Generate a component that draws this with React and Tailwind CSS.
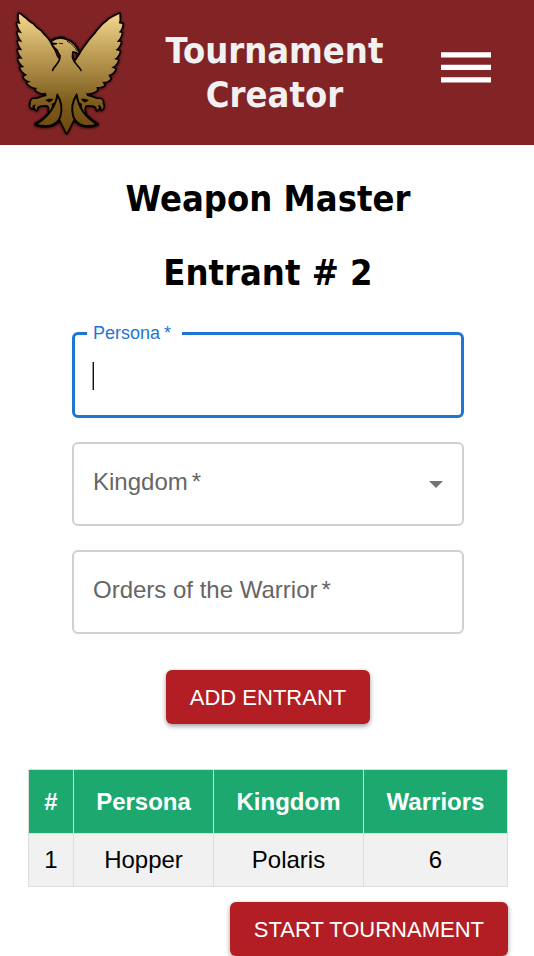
import React from "react";

const entrants = [{ persona: "Hopper", kingdom: "Polaris", warriors: 6 }];

const silhouette = [
  // left wing
  "M57 42 C66 46 68 52 77 56 C83 64 91 69 98 73 C105 82 114 88 122 94 C130 105 142 114 150 128 C156 142 166 154 176 170 L200 230 L200 300 L140 290 L138 278 C128 281 116 278 107 269 L112 264 C98 263 89 258 82 249 L93 244 C82 243 75 239 71 230 L82 225 C71 219 64 211 61 203 L73 201 C62 193 56 183 55 176 L68 176 C60 168 55 158 54 150 L67 151 C59 141 55 132 54 124 L67 126 C59 117 54 105 53 97 L66 100 C58 89 53 79 52 70 L62 72 C57 63 56 51 57 42 Z",
  // right wing
  "M358 42 C343 50 329 55 319 66 C309 72 303 82 292 93 C286 103 276 112 268 122 C258 136 248 148 239 165 L226 184 L200 230 L200 300 L262 290 L258 279 C267 281 280 279 291 270 L289 261 C296 262 305 261 313 256 L307 245 C315 246 325 244 331 236 L325 225 C333 223 341 219 346 208 L334 202 C342 200 350 193 354 181 L342 177 C350 174 356 167 359 154 L346 150 C352 147 359 140 362 126 L350 125 C356 121 362 112 365 99 L356 97 C361 92 367 84 367 72 L356 70 C361 60 357 51 358 42 Z",
  // left leg and talons
  "M140 288 C128 290 119 295 108 298 C98 295 91 302 93 311 C89 316 91 322 97 325 C96 317 100 313 107 315 C103 320 104 327 110 330 C110 321 115 317 124 316 L141 315 C148 318 150 325 147 333 C154 330 157 320 155 312 L176 300 L170 285 Z",
  // right leg and talons
  "M262 288 C273 290 283 295 293 298 C303 295 310 302 308 311 C312 316 311 325 305 329 C305 320 301 314 294 315 C298 320 297 327 291 330 C291 322 286 317 277 316 L260 315 C253 319 250 328 256 338 C247 333 244 320 246 312 L228 300 L232 285 Z",
  // head, neck and tail
  "M156 122 C161 119 166 116 172 117 C181 112 192 115 197 120 C216 124 232 140 237 161 C231 156 224 154 217 154 C213 168 218 182 228 195 L242 212 L240 290 L224 352 L200 398 L177 352 L162 290 L158 212 L173 192 C184 178 182 160 170 147 C163 145 159 140 160 135 L170 133 L168 129 L158 128 Z",
];

function EagleLogo() {
  return (
    <svg viewBox="36 24 345 387" className="h-[129px] w-[115px] shrink-0" role="img" aria-label="Golden eagle">
      <defs>
        <linearGradient id="gold" gradientUnits="userSpaceOnUse" x1="0" y1="40" x2="0" y2="400">
          <stop offset="0" stopColor="#f5d78e" />
          <stop offset="0.3" stopColor="#c4a45c" />
          <stop offset="0.55" stopColor="#9c7c38" />
          <stop offset="0.75" stopColor="#7c5b1b" />
          <stop offset="1" stopColor="#6b490b" />
        </linearGradient>
        <filter id="glow" x="-10%" y="-10%" width="120%" height="120%">
          <feDropShadow dx="0" dy="1" stdDeviation="5" floodColor="#000" floodOpacity="0.8" />
        </filter>
      </defs>
      <g filter="url(#glow)" fill="#080501" stroke="#080501" strokeWidth="10" strokeLinejoin="round">
        {silhouette.map((d) => (
          <path key={d} d={d} />
        ))}
        <path d="M172 284 C168 315 148 350 107 373 C140 384 172 378 181 350 Z M230 284 C234 315 252 350 292 373 C262 384 230 378 220 350 Z" />
      </g>
      <g fill="url(#gold)">
        {silhouette.map((d) => (
          <path key={d} d={d} />
        ))}
      </g>
      <path d="M136 301 C143 295 151 296 160 297 C155 303 149 309 145 306 Z M243 297 C252 295 260 296 267 301 L257 307 C251 308 247 303 243 297 Z" fill="#080501" />
      <g fill="url(#gold)" stroke="#080501" strokeWidth="6" strokeLinejoin="round">
        <path d="M172 284 C168 315 148 350 107 373 C140 384 172 378 181 350 C188 326 184 304 172 284 Z" />
        <path d="M230 284 C234 315 252 350 292 373 C262 384 230 378 220 350 C213 326 217 304 230 284 Z" />
      </g>
      <path d="M170 151 L178 164 L178 176 C174 172 168 160 166 152 Z M218 157 C224 156 230 159 233 163 L226 180 C220 175 217 165 218 157 Z" fill="#6d171b" stroke="#080501" strokeWidth="4" strokeLinejoin="round" />
      <g fill="none" stroke="#080501" strokeWidth="5" strokeLinecap="round">
        <path d="M180 166 C182 190 162 196 158 211 M217 168 C218 188 236 196 243 211" />
        <path d="M156 123 C164 116 174 114 182 115 C196 114 206 120 214 125 C228 136 235 148 238 160 M159 130 L170 131 M161 139 C163 144 168 146 173 152" strokeWidth="4" />
        <path d="M178 130 L188 131 M202 124 C215 130 226 142 231 153" strokeWidth="2.5" />
      </g>
    </svg>
  );
}

function Required() {
  return <span className="ml-1" aria-hidden="true">*</span>;
}

function Header() {
  return (
    <header className="flex items-center bg-[#822426] py-2 pr-6 pl-3">
      <EagleLogo />
      <h1 className="flex-1 text-center text-[36px] leading-[44px] font-bold text-[#f1f1f1] [font-family:'DejaVu_Sans_Condensed','Noto_Sans',sans-serif]">
        Tournament Creator
      </h1>
      <button type="button" aria-label="Open menu" className="px-[19px] pb-2.5">
        <svg viewBox="0 0 50 31" className="h-[31px] w-[50px]" fill="#fff" aria-hidden="true">
          <path d="M0 .3h50v5.2H0zM0 12.7h50v5.2H0zM0 25.2h50v5.2H0z" />
        </svg>
      </button>
    </header>
  );
}

function EntrantForm() {
  return (
    <form className="mt-[37px] flex flex-col gap-6 px-11" onSubmit={(e) => e.preventDefault()}>
      <div className="relative">
        <input
          id="persona"
          type="text"
          required
          className="block h-[86px] w-full rounded-md border-[3px] border-[#1f75d2] px-[18px] text-2xl caret-transparent outline-none"
        />
        <label htmlFor="persona" className="absolute -top-2 left-[15px] bg-white pr-[11px] pl-1.5 text-[18px] leading-[18px] text-[#1f75d2]">
          Persona<Required />
        </label>
        <span className="absolute top-[30px] left-5 h-7 w-0.5 border-l border-[#999] bg-[#111]" aria-hidden="true" />
      </div>
      <div className="relative">
        <select
          id="kingdom"
          required
          defaultValue=""
          className="block h-[84px] w-full appearance-none rounded-md border-2 border-[#d0d0d0] bg-white px-[18px] text-2xl"
        >
          <option value="" />
          <option value="polaris">Polaris</option>
        </select>
        <label htmlFor="kingdom" className="pointer-events-none absolute top-7 left-[21px] text-2xl leading-6 text-[#666]">
          Kingdom<Required />
        </label>
        <svg viewBox="0 0 14 7" className="pointer-events-none absolute top-[39px] right-[21px] h-[7px] w-[14px]" fill="#757575" aria-hidden="true">
          <path d="M0 0h14L7 7z" />
        </svg>
      </div>
      <div className="relative">
        <input
          id="orders"
          type="text"
          required
          className="block h-[84px] w-full rounded-md border-2 border-[#d0d0d0] px-[18px] text-2xl"
        />
        <label htmlFor="orders" className="pointer-events-none absolute top-7 left-[21px] text-2xl leading-6 text-[#666]">
          Orders of the Warrior<Required />
        </label>
      </div>
      <button
        type="submit"
        className="mt-3 h-[54px] self-center rounded-md bg-[#b21e24] px-6 text-[22px] text-white shadow-[0_2px_5px_rgba(0,0,0,0.4)]"
      >
        ADD ENTRANT
      </button>
    </form>
  );
}

function EntrantTable() {
  return (
    <table className="mt-[45px] w-full table-fixed border-collapse border border-[#ddd] text-center text-2xl text-black">
      <colgroup>
        <col className="w-[45px]" />
        <col className="w-[140px]" />
        <col className="w-[150px]" />
        <col />
      </colgroup>
      <thead>
        <tr className="h-16 bg-[#1da870] text-white">
          {["#", "Persona", "Kingdom", "Warriors"].map((name) => (
            <th key={name} scope="col" className="border border-[#ddd] font-bold">
              {name}
            </th>
          ))}
        </tr>
      </thead>
      <tbody>
        {entrants.map((entrant, i) => (
          <tr key={entrant.persona} className="h-[53px] bg-[#f1f1f1]">
            <td className="border border-[#ddd]">{i + 1}</td>
            <td className="border border-[#ddd]">{entrant.persona}</td>
            <td className="border border-[#ddd]">{entrant.kingdom}</td>
            <td className="border border-[#ddd]">{entrant.warriors}</td>
          </tr>
        ))}
      </tbody>
    </table>
  );
}

export default function App() {
  return (
    <div className="bg-white [font-family:'Liberation_Sans',Arial,sans-serif]">
      <Header />
      <main className="flex flex-col pt-8 pr-[26px] pl-7">
        <div className="flex flex-col gap-[30px] text-center text-[36px] leading-[44px] font-bold text-black [font-family:'DejaVu_Sans_Condensed','Noto_Sans',sans-serif]">
          <h2>Weapon Master</h2>
          <h2>Entrant # 2</h2>
        </div>
        <EntrantForm />
        <EntrantTable />
        <button
          type="button"
          className="mt-[15px] h-[54px] self-end rounded-md bg-[#b21e24] px-6 text-[22px] text-white shadow-[0_2px_5px_rgba(0,0,0,0.4)]"
        >
          START TOURNAMENT
        </button>
      </main>
    </div>
  );
}
